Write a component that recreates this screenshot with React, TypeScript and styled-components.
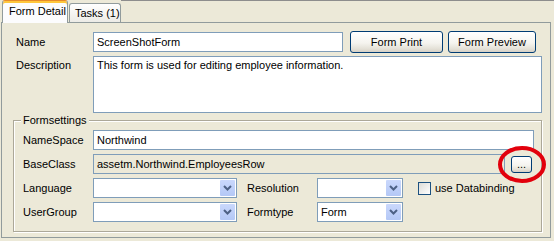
import React from 'react';
import styled, { createGlobalStyle } from 'styled-components';

const GlobalStyle = createGlobalStyle`
  html, body {
    margin: 0;
    padding: 0;
    background: #ece9d8;
  }
  body {
    font-family: "Liberation Sans", Arial, sans-serif;
    font-size: 11px;
    color: #000;
  }
`;

const Window = styled.div`
  width: 554px;
  height: 241px;
  overflow: hidden;
  background: #ece9d8;
  display: flex;
  flex-direction: column;
`;

const TabStrip = styled.div`
  display: flex;
  align-items: flex-end;
  height: 22px;
  padding-left: 2px;
  position: relative;
  z-index: 1;
`;

const Tab = styled.div<{ $active?: boolean; $w: number }>`
  box-sizing: border-box;
  width: ${p => p.$w}px;
  display: flex;
  align-items: center;
  white-space: nowrap;
  border: 1px solid #919b9c;
  border-bottom: none;
  ${p => p.$active
    ? `
    height: 23px;
    margin-bottom: -1px;
    align-self: flex-start;
    padding: 0 0 3px 6px;
    background: #fcfcfe;
    border-top: 1px solid #e68b2c;
    box-shadow: inset 0 2px 0 #ffc73c;
    border-radius: 3px 3px 0 0;
  `
    : `
    height: 19px;
    margin-left: 1px;
    padding-left: 5px;
    background: linear-gradient(#ffffff, #ecebe6);
    border-radius: 3px 3px 0 0;
  `}
`;

const StripFill = styled.div`
  flex: 1;
  align-self: stretch;
  border-top: 1px solid #8d8d8d;
`;

const Panel = styled.div`
  box-sizing: border-box;
  margin-left: 1px;
  width: 550px;
  height: 216px;
  border: 1px solid #919b9c;
  padding: 8px 8px 0 11px;
`;

const TopRow = styled.div`
  display: flex;
  align-items: center;
  height: 22px;
  padding-left: 3px;
`;

const DescRow = styled.div`
  display: flex;
  align-items: flex-start;
  margin-top: 3px;
  padding-left: 3px;
`;

const Label = styled.span<{ $w: number; $top?: number }>`
  flex: none;
  width: ${p => p.$w}px;
  white-space: nowrap;
  padding-top: ${p => p.$top ?? 0}px;
`;

const TextBox = styled.input<{ $w?: number; $readOnlyLook?: boolean }>`
  box-sizing: border-box;
  ${p => (p.$w ? `width: ${p.$w}px; flex: none;` : 'flex: 1; min-width: 0;')}
  height: 20px;
  margin: 0;
  border: 1px solid #7f9db9;
  background: ${p => (p.$readOnlyLook ? '#ece9d8' : '#fff')};
  padding: 0 3px;
  font: 11px "Liberation Sans", Arial, sans-serif;
  color: #000;
  outline: none;
`;

const TextArea = styled.textarea`
  box-sizing: border-box;
  flex: 1;
  height: 57px;
  margin: 0;
  border: 1px solid #7f9db9;
  background: #fff;
  padding: 2px 3px;
  font: 11px/13px "Liberation Sans", Arial, sans-serif;
  color: #000;
  resize: none;
  outline: none;
`;

const XPButton = styled.button<{ $w: number; $h?: number; $ml?: number }>`
  box-sizing: border-box;
  flex: none;
  width: ${p => p.$w}px;
  height: ${p => p.$h ?? 22}px;
  margin: 0 0 0 ${p => p.$ml ?? 0}px;
  padding: 0;
  border: 1px solid #003c74;
  border-radius: 3px;
  background: linear-gradient(#ffffff 0%, #f5f4ef 55%, #e3e0d6 85%, #d6d0c5 100%);
  font: 11px "Liberation Sans", Arial, sans-serif;
  color: #000;
`;

const Group = styled.fieldset`
  box-sizing: border-box;
  margin: 1px 0 0 0;
  width: 529px;
  padding: 3px 7px 9px 9px;
  border: 1px solid #aca899;
  box-shadow: inset 1px 1px 0 #fff, 1px 1px 0 #fff;
  display: flex;
  flex-direction: column;
  gap: 4px;
`;

const Legend = styled.legend`
  position: relative;
  padding: 0 2px;
  margin-left: -2px;
  background: #ece9d8;
  line-height: 13px;
`;

const GroupRow = styled.div`
  position: relative;
  display: flex;
  align-items: center;
  height: 20px;
`;

const Combo = styled.div<{ $w: number }>`
  box-sizing: border-box;
  flex: none;
  width: ${p => p.$w}px;
  height: 20px;
  border: 1px solid #7f9db9;
  background: #fff;
  display: flex;
`;

const ComboText = styled.span`
  flex: 1;
  display: flex;
  align-items: center;
  padding-left: 3px;
`;

const DropButton = styled.span`
  width: 15px;
  margin: 1px;
  border-radius: 1px;
  background: linear-gradient(#cad8fc, #b4c8f6);
  display: flex;
  align-items: center;
  justify-content: center;
`;

const Spacer = styled.span<{ $w: number }>`
  flex: none;
  width: ${p => p.$w}px;
`;

const CheckBox = styled.span`
  box-sizing: border-box;
  flex: none;
  width: 13px;
  height: 13px;
  border: 1px solid #1c5180;
  background: linear-gradient(135deg, #dcdcd7, #ffffff);
  margin-right: 4px;
`;

const Highlight = styled.svg`
  position: absolute;
  left: 474px;
  top: -9px;
  pointer-events: none;
`;

const Chevron = () => (
  <svg width="9" height="6" viewBox="0 0 9 6">
    <path d="M1 1 L4.5 4.5 L8 1" fill="none" stroke="#4d6185" strokeWidth="2" />
  </svg>
);

const ComboBox: React.FC<{ w: number; value?: string }> = ({ w, value }) => (
  <Combo $w={w}>
    <ComboText>{value}</ComboText>
    <DropButton>
      <Chevron />
    </DropButton>
  </Combo>
);

export default function App() {
  return (
    <Window>
      <GlobalStyle />
      <TabStrip>
        <Tab $active $w={66}>Form Detail</Tab>
        <Tab $w={52}>Tasks (1)</Tab>
        <StripFill />
      </TabStrip>
      <Panel>
        <TopRow>
          <Label $w={77}>Name</Label>
          <TextBox $w={250} readOnly value="ScreenShotForm" />
          <XPButton $w={93} $ml={7}>Form Print</XPButton>
          <XPButton $w={88} $ml={5}>Form Preview</XPButton>
        </TopRow>
        <DescRow>
          <Label $w={77} $top={3}>Description</Label>
          <TextArea readOnly value="This form is used for editing employee information." />
        </DescRow>
        <Group>
          <Legend>Formsettings</Legend>
          <GroupRow>
            <Label $w={70}>NameSpace</Label>
            <TextBox readOnly value="Northwind" />
          </GroupRow>
          <GroupRow>
            <Label $w={70}>BaseClass</Label>
            <TextBox $readOnlyLook readOnly value="assetm.Northwind.EmployeesRow" />
            <XPButton $w={21} $h={17} $ml={6} style={{ marginRight: 2 }}>...</XPButton>
            <Highlight width="50" height="40" viewBox="0 0 50 40">
              <ellipse cx="25" cy="19.5" rx="22" ry="16.5" fill="none" stroke="#e2000c" strokeWidth="4" />
            </Highlight>
          </GroupRow>
          <GroupRow>
            <Label $w={70}>Language</Label>
            <ComboBox w={144} />
            <Spacer $w={10} />
            <Label $w={70}>Resolution</Label>
            <ComboBox w={86} />
            <Spacer $w={15} />
            <CheckBox />
            <span>use Databinding</span>
          </GroupRow>
          <GroupRow>
            <Label $w={70}>UserGroup</Label>
            <ComboBox w={144} />
            <Spacer $w={10} />
            <Label $w={70}>Formtype</Label>
            <ComboBox w={86} value="Form" />
          </GroupRow>
        </Group>
      </Panel>
    </Window>
  );
}
